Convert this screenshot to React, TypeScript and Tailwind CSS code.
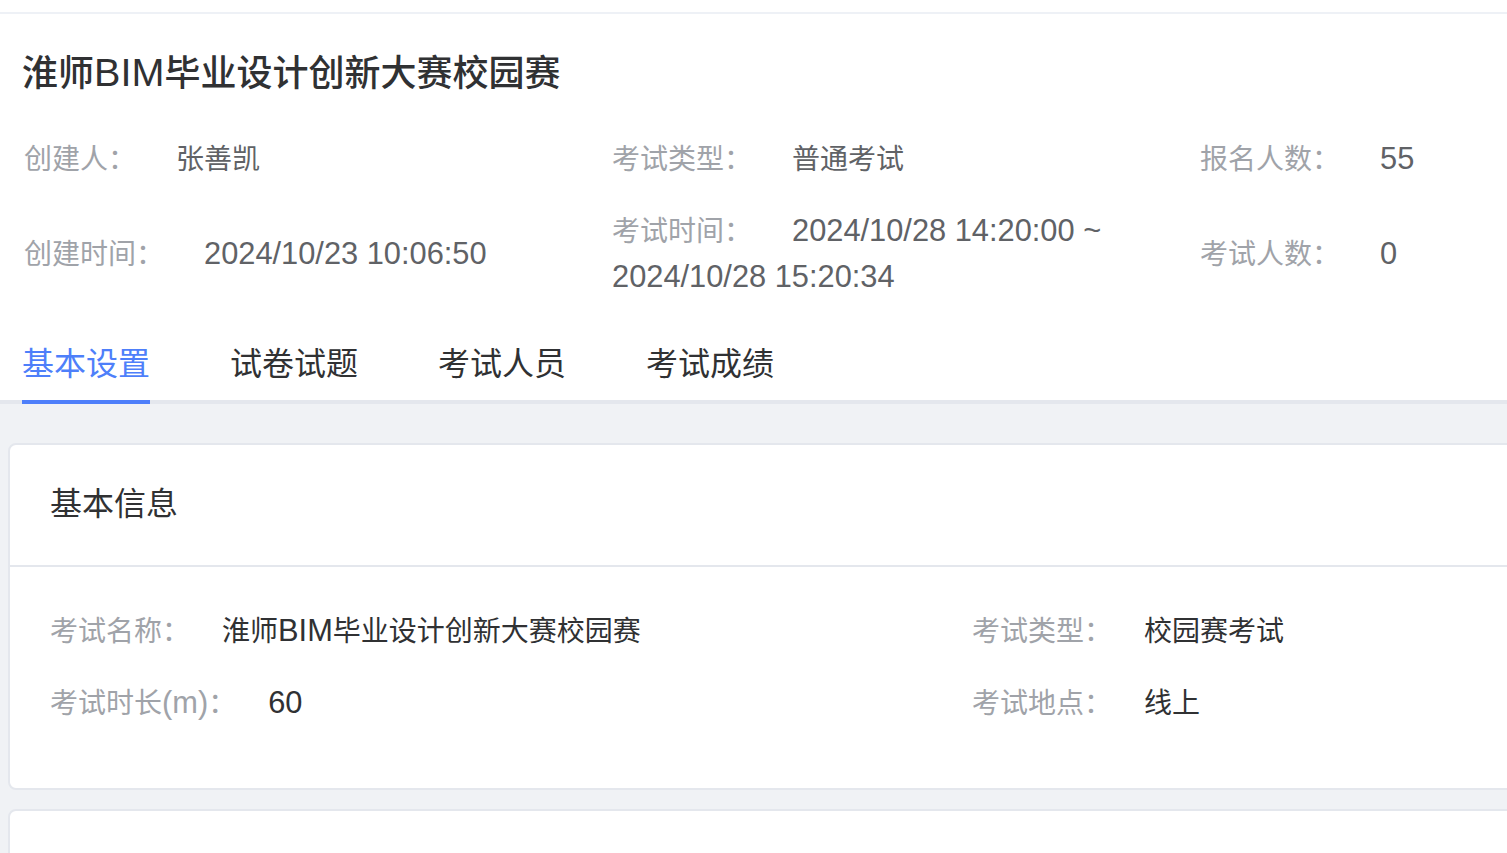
import React from "react";

// Latin runs render a touch larger than the CJK glyphs in the reference
function Txt({ s }: { s: string }) {
  const parts = s.split(/([\x20-\x7e]+)/).filter((p) => p !== "");
  return (
    <>
      {parts.map((p, i) =>
        /^[\x20-\x7e]+$/.test(p) ? (
          <span key={i} className="text-[1.1em] leading-none">
            {p}
          </span>
        ) : (
          <React.Fragment key={i}>{p}</React.Fragment>
        )
      )}
    </>
  );
}

function MetaItem({ label, value }: { label: string; value: string }) {
  return (
    <div className="text-[28px] leading-[46px] pr-[60px]">
      <span className="mr-[40px] text-[#a0a3a9]">{label}：</span>
      <span className="text-[#606266]">
        <Txt s={value} />
      </span>
    </div>
  );
}

function FormItem({ label, value }: { label: string; value: string }) {
  return (
    <div className="text-[28px] leading-[46px]">
      <span className="mr-[32px] text-[#a0a3a9]">
        <Txt s={label} />：
      </span>
      <span className="text-[#303133]">
        <Txt s={value} />
      </span>
    </div>
  );
}

const tabs = ["基本设置", "试卷试题", "考试人员", "考试成绩"];

export default function App() {
  return (
    <div className="h-screen w-full overflow-hidden bg-white font-['Liberation_Sans','Noto_Sans_CJK_SC',sans-serif]">
      <div className="w-[1840px]">
        {/* top strip */}
        <div className="h-[12px] bg-white"></div>
        <div className="h-[2px] bg-[#eef1f6]"></div>

        {/* exam header */}
        <div className="px-[24px]">
          <h1 className="pt-[36px] text-[36px] leading-[48px] font-medium text-[#303133] -ml-[2px]">
            <Txt s="淮师BIM毕业设计创新大赛校园赛" />
          </h1>

          <div className="mt-[39px] grid grid-cols-[588px_588px_588px] items-center gap-y-[26px]">
            <MetaItem label="创建人" value="张善凯" />
            <MetaItem label="考试类型" value="普通考试" />
            <MetaItem label="报名人数" value="55" />
            <MetaItem label="创建时间" value="2024/10/23 10:06:50" />
            <MetaItem label="考试时间" value="2024/10/28 14:20:00 ~ 2024/10/28 15:20:34" />
            <MetaItem label="考试人数" value="0" />
          </div>
        </div>

        {/* tabs */}
        <div className="mt-[19px] border-b-4 border-[#e4e7ed]">
          <div className="flex gap-[80px] pl-[22px]">
            {tabs.map((t, i) => (
              <div
                key={t}
                className={
                  i === 0
                    ? "relative h-[80px] pt-[8px] flex items-center text-[32px] text-[#4e7ffa]"
                    : "relative h-[80px] pt-[8px] flex items-center text-[32px] text-[#303133]"
                }
              >
                {t}
                {i === 0 && (
                  <div className="absolute left-0 right-0 -bottom-[4px] h-[4px] bg-[#4e7ffa]"></div>
                )}
              </div>
            ))}
          </div>
        </div>

        {/* content */}
        <div className="bg-[#f0f2f5] pt-[39px] pl-[8px] pb-[40px]">
          <div className="rounded-[8px] border-2 border-[#e4e7ed] bg-white">
            <div className="h-[122px] border-b-2 border-[#e4e7ed] px-[40px] pb-[2px] flex items-center text-[32px] text-[#303133]">
              基本信息
            </div>
            <div className="px-[40px] pt-[42px] pb-[61px]">
              <div className="grid grid-cols-[922px_1fr] gap-y-[26px]">
                <FormItem label="考试名称" value="淮师BIM毕业设计创新大赛校园赛" />
                <FormItem label="考试类型" value="校园赛考试" />
                <FormItem label="考试时长(m)" value="60" />
                <FormItem label="考试地点" value="线上" />
              </div>
            </div>
          </div>

          <div className="mt-[19px] rounded-[8px] border-2 border-[#e4e7ed] bg-white">
            <div className="h-[122px] border-b-2 border-[#e4e7ed] px-[40px] pb-[2px] flex items-center text-[32px] text-[#303133]">
              考试设置
            </div>
            <div className="h-[300px]"></div>
          </div>
        </div>
      </div>
    </div>
  );
}
